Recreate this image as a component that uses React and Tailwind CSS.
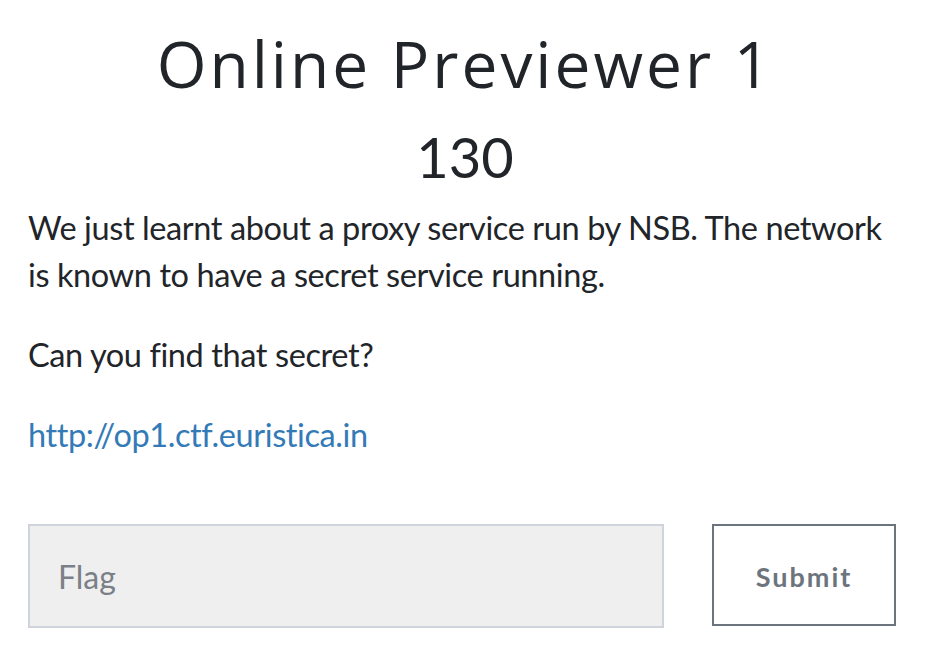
export default function App() {
  return (
    <div className="min-h-screen bg-white px-[28px] pt-[24px] text-[#212529]" style={{ fontFamily: 'Lato, "Noto Sans", sans-serif' }}>
      <h1 className="text-center text-[64px] font-normal leading-[80px] tracking-[3px] text-[#212529]" style={{ fontFamily: '"Open Sans", Lato, sans-serif' }}>
        Online Previewer 1
      </h1>
      <h3 className="mt-[20px] text-center text-[56px] leading-[66px]">130</h3>
      <div className="mt-[14px] text-[32.5px] leading-[47px] tracking-[-0.4px]">
        <p className="w-[866px]">We just learnt about a proxy service run by NSB. The network is known to have a secret service running.</p>
        <p className="mt-[33px]">Can you find that secret?</p>
        <p className="mt-[33px]">
          <a href="#" className="text-[#337ab7]">http://op1.ctf.euristica.in</a>
        </p>
      </div>
      <div className="mt-[66px] flex gap-[48px]">
        <input
          type="text"
          placeholder="Flag"
          className="h-[104px] w-[636px] border-2 border-[#ced4da] bg-[#efefef] px-[28px] text-[32px] placeholder:text-[#7a8087] focus:outline-none"
        />
        <button className="h-[102px] w-[184px] border-2 border-[#6c757d] bg-white pt-[4px] text-[27px] font-bold tracking-[2px] text-[#6c757d]">
          Submit
        </button>
      </div>
    </div>
  )
}
